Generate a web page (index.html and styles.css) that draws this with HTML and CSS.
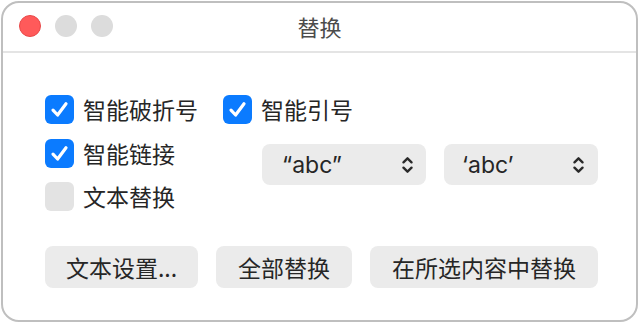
FILE: index.html
```html
<!DOCTYPE html>
<html lang="zh-CN">
<head>
<meta charset="utf-8">
<title>替换</title>
<link rel="stylesheet" href="styles.css">
</head>
<body>
<div class="window">
  <div class="titlebar">
    <div class="lights">
      <span class="light red"></span>
      <span class="light gray"></span>
      <span class="light gray"></span>
    </div>
    <div class="title">替换</div>
    <div></div>
  </div>
  <div class="content">
    <div class="options">
      <label class="check r1 c1"><span class="box on"><svg viewBox="0 0 29 29"><path d="M8 15.2 L12.6 20 L21 8.8"/></svg></span>智能破折号</label>
      <label class="check r1 c2"><span class="box on"><svg viewBox="0 0 29 29"><path d="M8 15.2 L12.6 20 L21 8.8"/></svg></span>智能引号</label>
      <label class="check r2 c1"><span class="box on"><svg viewBox="0 0 29 29"><path d="M8 15.2 L12.6 20 L21 8.8"/></svg></span>智能链接</label>
      <div class="popups r2 c2">
        <div class="popup wide"><span>“abc”</span><svg class="chev" viewBox="0 0 10 17"><path d="M1.2 6 L5 2.2 L8.8 6 M1.2 11 L5 14.8 L8.8 11"/></svg></div>
        <div class="popup narrow"><span>‘abc’</span><svg class="chev" viewBox="0 0 10 17"><path d="M1.2 6 L5 2.2 L8.8 6 M1.2 11 L5 14.8 L8.8 11"/></svg></div>
      </div>
      <label class="check r3 c1"><span class="box off"></span>文本替换</label>
    </div>
    <div class="buttons">
      <button class="btn b1">文本设置...</button>
      <button class="btn b2">全部替换</button>
      <button class="btn b3">在所选内容中替换</button>
    </div>
  </div>
</div>
</body>
</html>
```
FILE: styles.css
```css
html, body {
  margin: 0;
  padding: 0;
  background: #ffffff;
}
body {
  font-family: "Inter", "Noto Sans CJK SC", sans-serif;
  color: #262626;
}
.window {
  margin: 1px;
  width: 637px;
  height: 321px;
  box-sizing: border-box;
  border: 2px solid #bfbfbf;
  border-radius: 18px;
  background: #ffffff;
  overflow: hidden;
}
.titlebar {
  height: 50px;
  box-sizing: border-box;
  border-bottom: 2px solid #e4e4e4;
  display: grid;
  grid-template-columns: 1fr auto 1fr;
  align-items: center;
  padding-left: 16px;
  padding-right: 16px;
}
.lights {
  display: flex;
  gap: 14px;
  align-items: center;
  padding-bottom: 2px;
}
.light {
  width: 22px;
  height: 22px;
  border-radius: 50%;
  box-sizing: border-box;
}
.light.red {
  background: #ff5a5a;
  border: 1px solid #e84848;
}
.light.gray {
  background: #dcdcdc;
}
.title {
  font-size: 22px;
  color: #4b4b4b;
  padding-bottom: 2px;
  font-family: "Noto Sans CJK SC", sans-serif;
}
.content {
  padding: 42px 0 0 42px;
}
.options {
  display: grid;
  grid-template-columns: 178px auto;
  grid-template-rows: 30px 29px 29px;
  row-gap: 14px;
}
.r1 { grid-row: 1; }
.r2 { grid-row: 2; }
.r3 { grid-row: 3; }
.c1 { grid-column: 1; }
.c2 { grid-column: 2; }
.check {
  display: flex;
  align-items: center;
  gap: 9px;
  font-size: 23px;
  font-family: "Noto Sans CJK SC", sans-serif;
  color: #262626;
  line-height: 29px;
  height: 29px;
}
.box {
  width: 29px;
  height: 29px;
  border-radius: 6px;
  box-sizing: border-box;
  flex: none;
  display: flex;
}
.box.on {
  background: #0b7bff;
}
.box.off {
  background: #e3e3e3;
}
.box svg {
  width: 29px;
  height: 29px;
}
.box svg path {
  fill: none;
  stroke: #ffffff;
  stroke-width: 3.2;
  stroke-linecap: round;
  stroke-linejoin: round;
}
.popups {
  display: flex;
  gap: 18px;
  margin-left: 39px;
  margin-top: 5px;
  align-self: start;
  height: 41px;
}
.popup {
  height: 41px;
  box-sizing: border-box;
  background: #ebebeb;
  border-radius: 8px;
  display: flex;
  align-items: center;
  justify-content: space-between;
  font-size: 23px;
  color: #262626;
}
.popup.wide {
  width: 164px;
  padding: 0 13px 0 20px;
}
.popup.narrow {
  width: 154px;
  padding: 0 14px 0 18px;
}
.chev {
  width: 11px;
  height: 18px;
}
.chev path {
  fill: none;
  stroke: #2a2a2a;
  stroke-width: 2.2;
  stroke-linecap: round;
  stroke-linejoin: round;
}
.buttons {
  display: flex;
  gap: 18px;
  margin-top: 35px;
}
.btn {
  height: 42px;
  border: none;
  background: #ebebeb;
  border-radius: 8px;
  font-family: "Noto Sans CJK SC", sans-serif;
  font-size: 23px;
  color: #262626;
  padding: 0;
  display: flex;
  align-items: center;
  justify-content: center;
}
.b1 { width: 153px; }
.b2 { width: 136px; }
.b3 { width: 228px; }
```
